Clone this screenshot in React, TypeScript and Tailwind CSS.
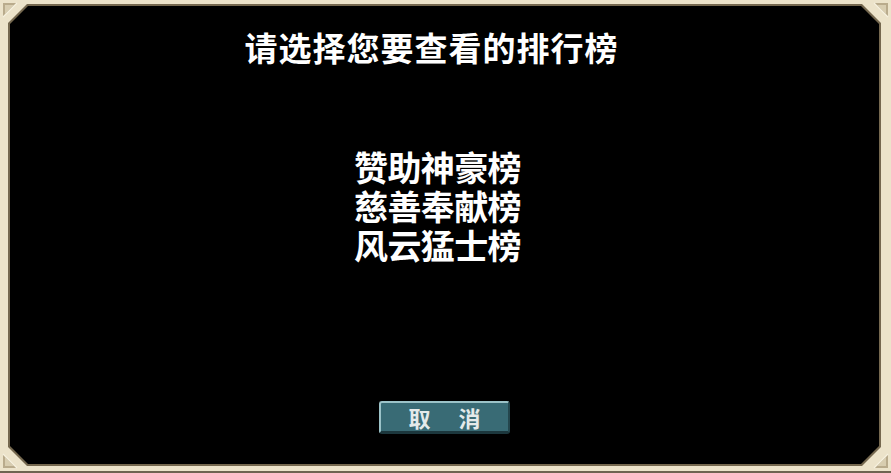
import React from 'react';

const CJK = "font-['Noto_Sans_CJK_SC','Noto_Sans_CJK_JP',sans-serif]";

const boards = ['赞助神豪榜', '慈善奉献榜', '风云猛士榜'];

/** Small bevelled triangle that sits in each corner of the parchment frame. */
function CornerMark({ className, flip }: { className: string; flip: string }) {
  return (
    <svg className={`absolute ${className} ${flip}`} width="20" height="20" viewBox="0 0 20 20">
      <polygon points="1,1 15,1 1,15" fill="#b9ab8c" />
      <polygon points="3,3 12,3 3,12" fill="#d8cdb0" />
      <polyline points="1,15 15,1" stroke="#f6f0df" strokeWidth="1.2" fill="none" />
    </svg>
  );
}

export default function App() {
  return (
    <div className="relative w-[891px] h-[473px] bg-[#ece3ca] pt-[4px] pl-[8px] pr-[10px] pb-[5px] border-b-2 border-[#6f6350]">
      {/* inner brown rule, with cut corners */}
      <div className="h-full bg-[#75684f] p-[2px] [clip-path:polygon(19px_0,calc(100%_-_19px)_0,100%_19px,100%_calc(100%_-_19px),calc(100%_-_19px)_100%,19px_100%,0_calc(100%_-_19px),0_19px)]">
        <div className="h-full bg-black flex flex-col items-center text-white pt-[25px] pb-[30px] [clip-path:polygon(18px_0,calc(100%_-_18px)_0,100%_18px,100%_calc(100%_-_18px),calc(100%_-_18px)_100%,18px_100%,0_calc(100%_-_18px),0_18px)]">
          <h1 className={`${CJK} text-[33px] leading-[33px] tracking-[1px] font-bold mr-[26px]`}>
            请选择您要查看的排行榜
          </h1>

          <ul className={`${CJK} mt-[86px] mr-[14px] text-[34px] leading-[34px] tracking-[-0.6px] font-bold text-center flex flex-col gap-[5px]`}>
            {boards.map((b) => (
              <li key={b} className="cursor-pointer hover:text-yellow-200">{b}</li>
            ))}
          </ul>

          <button
            className={`${CJK} mt-auto w-[131px] h-[33px] rounded-[3px] bg-[#396b75] border-t-2 border-l-2 border-[#9cc3c8] border-r-2 border-b-[3px] border-r-[#24464d] border-b-[#1c373d] text-[#e4eaea] text-[22px] leading-none tracking-[3px] pl-[3px] font-bold`}
          >
            取　消
          </button>
        </div>
      </div>

      <CornerMark className="top-[2px] left-[2px]" flip="" />
      <CornerMark className="top-[2px] right-[2px]" flip="-scale-x-100" />
      <CornerMark className="bottom-[2px] left-[2px]" flip="-scale-y-100" />
      <CornerMark className="bottom-[2px] right-[2px]" flip="-scale-100" />
    </div>
  );
}
